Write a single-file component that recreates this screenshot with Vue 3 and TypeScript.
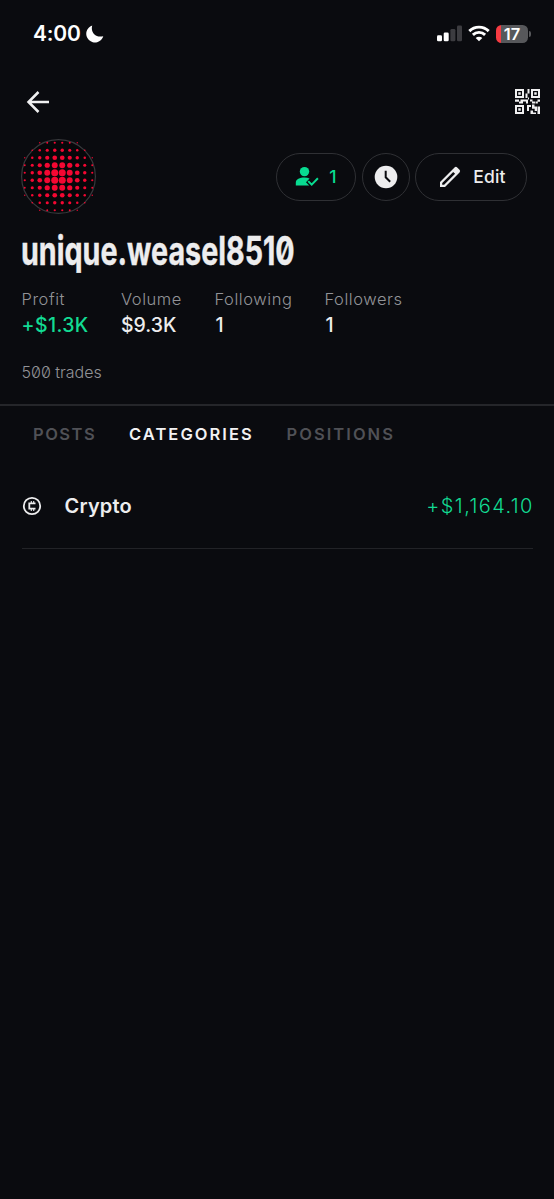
<script setup lang="ts">
interface Dot { x: number; y: number; r: number }

const dots: Dot[] = []
for (let row = 0; row < 10; row++) {
  for (let col = 0; col < 10; col++) {
    const d = Math.hypot(row - 4.5, col - 4.5)
    const r = 3.95 - d * 0.63
    if (r > 0.7) dots.push({ x: 37.5 + (col - 4.5) * 7.5, y: 37.5 + (row - 4.5) * 7.5, r })
  }
}

const finders = [{ x: 0, y: 0 }, { x: 16, y: 0 }, { x: 0, y: 16 }]

const stats = [
  { label: 'Profit', value: '+$1.3K', key: 'profit' },
  { label: 'Volume', value: '$9.3K', key: 'volume' },
  { label: 'Following', value: '1', key: 'following' },
  { label: 'Followers', value: '1', key: 'followers' },
]
</script>

<template>
  <main class="screen">
    <header class="status">
      <span class="time">4:00</span>
      <svg class="moon" width="18" height="18" viewBox="0 0 18 18"><path d="M6.200.5C4.300 7.400 9.800 13.200 17.300 11.200A8.700 8.700 0 1 1 6.200.5Z" fill="#fff" /></svg>
      <svg class="signal" width="26" height="17" viewBox="0 0 26 17">
        <rect x="0" y="10.300" width="5" height="6" rx="1.300" fill="#fff" />
        <rect x="6.700" y="7.500" width="5" height="8.800" rx="1.300" fill="#fff" />
        <rect x="13.400" y="4" width="5" height="12.300" rx="1.300" fill="#3c3c40" />
        <rect x="20" y=".6" width="5" height="15.700" rx="1.300" fill="#3c3c40" />
      </svg>
      <svg class="wifi" width="22" height="17" viewBox="0 0 22 17" fill="none" stroke="#fff" stroke-width="2.900">
        <path d="M1.300 6.100a13.900 13.900 0 0 1 19.400 0" />
        <path d="M4.900 9.900a8.700 8.700 0 0 1 12.200 0" />
        <path d="M11 16.300 7.700 13a4.700 4.700 0 0 1 6.600 0Z" fill="#fff" stroke="none" />
      </svg>
      <div class="battery"><span>17</span></div>
      <i class="nub"></i>
    </header>

    <nav class="topbar">
      <svg width="24" height="24" viewBox="0 0 24 24" fill="none" stroke="#f0f0f1" stroke-width="2.500"><path d="M12.500 2 2.500 12l10 10M2.500 12H23" /></svg>
      <svg width="25" height="25" viewBox="0 0 25 25" fill="#f0f0f1">
        <g v-for="f in finders" :key="`${f.x}-${f.y}`">
          <rect :x="f.x + 1" :y="f.y + 1" width="7" height="7" fill="none" stroke="#f0f0f1" stroke-width="2" />
          <rect :x="f.x + 3.25" :y="f.y + 3.25" width="2.500" height="2.500" />
        </g>
        <path d="M12.500 0h2v4.500h-2v4.500h-2v-4.500h2ZM0 10.500h4v2.300H0ZM5.500 10.500h8.500v-2h-1v6h-2v-2h-3v2h-4v-2h1.500ZM15 10.500h2.500v2H20v2h-3v-2h-2ZM19 10.500h2v-0h-2ZM22.500 10.500H25v2.300h-2.500ZM20.500 12.500h2.300v2h-2.300ZM12 16h4v2h-2v4h-2ZM17 15.500h2.500v2H22v4.500h-2.300v-2.200H17ZM22.500 17.500H25v7.500h-2.500ZM15.500 21.500h2.500v2h3V25h-5.500Z" />
      </svg>
    </nav>

    <section class="profile">
      <svg class="avatar" width="75" height="75" viewBox="0 0 75 75">
        <circle cx="37.500" cy="37.500" r="36.900" fill="#07070a" stroke="#38393c" stroke-width="1.200" />
        <circle v-for="(d, i) in dots" :key="i" :cx="d.x" :cy="d.y" :r="d.r" fill="#f40732" />
      </svg>
      <div class="actions">
        <button class="pill follow">
          <svg width="24" height="22" viewBox="0 0 24 22">
            <circle cx="9.500" cy="5.600" r="4.700" fill="#08dc91" />
            <path d="M.8 19.500v-2.800c0-3.500 4-5.100 8.700-5.100 1.900 0 3.700.3 5.100.9l-3.600 3.700 3.200 3.300Z" fill="#08dc91" />
            <path d="m13.200 15.100 3.500 3.500 6.200-6.300" fill="none" stroke="#08dc91" stroke-width="2" />
          </svg>
          <span>1</span>
        </button>
        <button class="pill clock">
          <svg width="24" height="24" viewBox="0 0 24 24"><circle cx="12" cy="12" r="11.300" fill="#ededee" /><path d="M11.700 5.800v6.500l4.500 4.400" fill="none" stroke="#0a0b0f" stroke-width="2" /></svg>
        </button>
        <button class="pill edit">
          <svg width="22" height="22" viewBox="0 0 22 22">
            <path fill="#ededee" fill-rule="evenodd" d="M1 21v-5L15.500 1.500q1.400-1.300 2.700 0l2.300 2.300q1.300 1.300 0 2.700L6 21ZM3.200 18.800h1.900L16.100 7.800l-1.900-1.900L3.200 16.900Z" />
          </svg>
          <span>Edit</span>
        </button>
      </div>
    </section>

    <h1 class="name"><span>unique.weasel8510</span></h1>

    <dl class="stats">
      <div v-for="s in stats" :key="s.key" :class="['stat', s.key]">
        <dt>{{ s.label }}</dt>
        <dd>{{ s.value }}</dd>
      </div>
    </dl>
    <p class="trades"><span class="count">500</span> trades</p>

    <div class="tabs">
      <span class="tab posts">POSTS</span>
      <span class="tab categories">CATEGORIES</span>
      <span class="tab positions">POSITIONS</span>
    </div>

    <section class="row">
      <svg width="20" height="20" viewBox="0 0 20 20" fill="none" stroke="#ededee">
        <circle cx="10" cy="10" r="8.200" stroke-width="1.800" />
        <path d="M13.500 7.300H7.300v5.400h6.200" stroke-width="1.800" />
        <path d="M9.300 5v2M11.700 5v2M9.300 13v2M11.700 13v2" stroke-width="1.100" />
      </svg>
      <span class="crypto">Crypto</span>
      <span class="amount">+$1,164.10</span>
    </section>
  </main>
</template>

<style>
html, body { background: #0a0b0f; }
</style>

<style scoped>
.screen {
  width: 554px; height: 1199px; box-sizing: border-box; overflow: hidden;
  background: #0a0b0f; color: #ededee; font-family: Inter, "Liberation Sans", sans-serif;
}
.status { display: flex; align-items: center; height: 67px; padding: 0 26px 0 33px; box-sizing: border-box; }
.time { font-size: 21px; font-weight: 600; color: #fff; width: 53px; letter-spacing: -.2px; }
.moon { flex: none; }
.signal { margin-left: auto; margin-right: 5px; }
.wifi { margin-right: 6px; }
.battery {
  width: 32px; height: 18px; border-radius: 5.500px; color: #fff; font-size: 16.500px; font-weight: 600;
  line-height: 18px; text-align: center; background: linear-gradient(90deg, #f63b42 0 5.500px, #57585b 5.500px);
}
.nub { width: 2px; height: 6px; margin-left: 1px; border-radius: 0 2px 2px 0; background: #57585b; margin-right: -3px; }
.topbar { display: flex; align-items: center; justify-content: space-between; height: 69px; padding: 0 14px 0 26px; }
.profile { display: flex; align-items: center; justify-content: space-between; height: 81px; padding: 0 27px 0 21.300px; }
.actions { display: flex; gap: 5.500px; }
.pill {
  display: flex; align-items: center; justify-content: center; height: 48px; box-sizing: border-box; padding: 0;
  border: 1.500px solid #2f3034; border-radius: 24px; background: transparent; color: #ededee;
  font: 500 17.500px Inter, "Liberation Sans", sans-serif;
}
.follow { width: 80px; gap: 10px; color: #08dc91; }
.clock { width: 48px; }
.edit { width: 112px; gap: 12.500px; padding-left: 2.500px; letter-spacing: .2px; }
.name { margin: 9px 0 0 21px; height: 49px; line-height: 49px; font-size: 40px; font-weight: 700; white-space: nowrap; font-feature-settings: "zero"; }
.name span { display: inline-block; transform: scaleX(.717); transform-origin: left; -webkit-text-stroke: .4px #ededee; }
.stats { display: flex; margin: 12px 0 0 21.500px; }
.stat { flex: none; }
.profit { width: 99.500px; }
.volume { width: 93.500px; }
.following { width: 110px; }
dt { height: 25px; line-height: 24px; font-size: 16.500px; font-weight: 300; color: #929397; letter-spacing: .55px; }
dd { margin: 0; height: 27px; line-height: 27px; font-size: 19.500px; font-weight: 500; }
.following dd, .followers dd { padding-left: 1px; }
.profit dd { color: #12db93; letter-spacing: .4px; }
.trades { margin: 22px 0 0 21.500px; height: 23px; line-height: 22px; font-size: 16px; font-weight: 300; color: #929397; }
.count { font-feature-settings: "zero"; }
.tabs { display: flex; margin-top: 20px; height: 59px; line-height: 57px; border-top: 2px solid #25262a; padding-left: 33px; font-size: 16.500px; font-weight: 600; letter-spacing: 1.500px; color: #505156; box-sizing: border-box; }
.posts { width: 96px; }
.categories { width: 157.500px; color: #f2f2f3; letter-spacing: 2.050px; }
.positions { letter-spacing: 2.050px; }
.row { display: flex; align-items: center; margin: 0 21.500px 0 22px; height: 84px; padding-top: 1px; box-sizing: content-box; border-bottom: 1px solid #222327; font-size: 20px; }
.crypto { margin-left: 22.500px; font-weight: 600; letter-spacing: .2px; }
.amount { margin-left: auto; margin-right: -1.300px; font-size: 20px; font-weight: 350; color: #12db93; letter-spacing: 1.400px; font-feature-settings: "calt" 0; }
</style>
